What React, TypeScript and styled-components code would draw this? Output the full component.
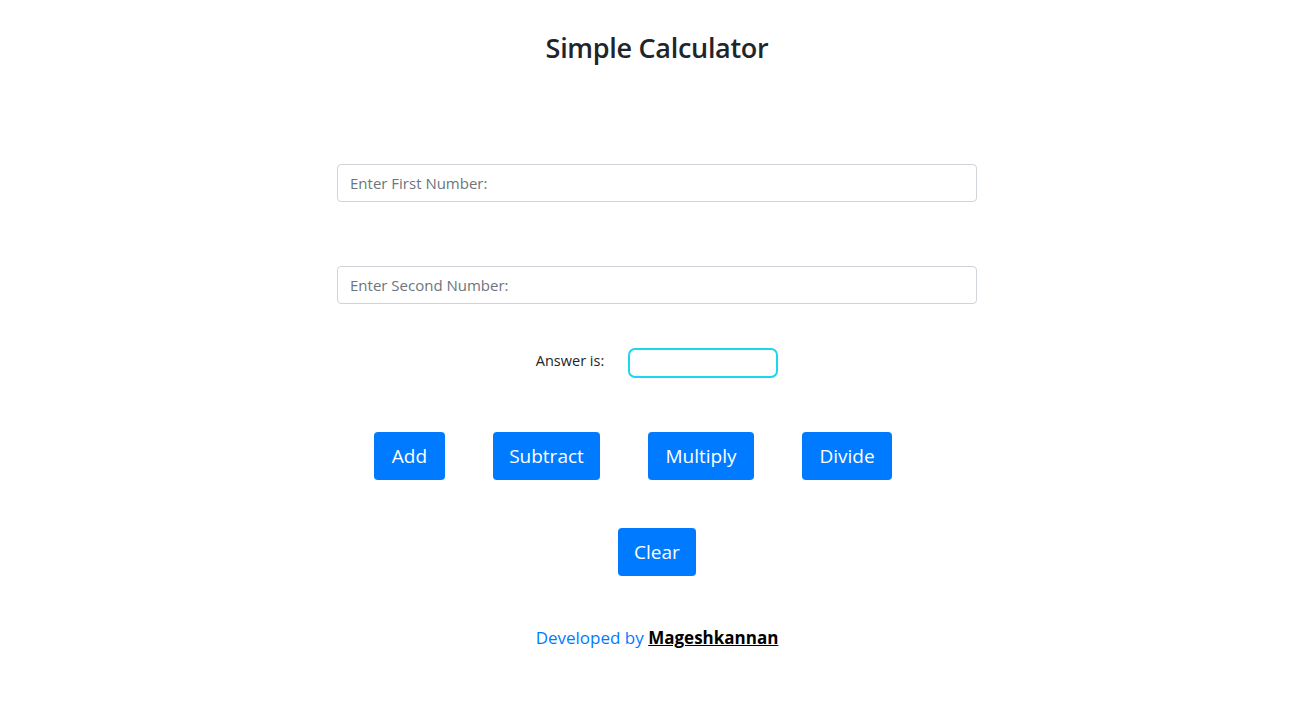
import React, { useState } from "react";
import styled, { createGlobalStyle } from "styled-components";

const GlobalStyle = createGlobalStyle`
  body {
    margin: 0;
    background: #fff;
    font-family: "Open Sans", "Noto Sans", sans-serif;
    color: #212529;
  }
`;

const Page = styled.div`
  display: flex;
  flex-direction: column;
  align-items: center;
  padding: 31px 2px 0 0;
`;

const Title = styled.h3`
  margin: 0;
  font-size: 27px;
  font-weight: 600;
  line-height: 34px;
  letter-spacing: -0.3px;
  color: #212529;
`;

const Form = styled.div`
  width: 640px;
  display: flex;
  flex-direction: column;
  align-items: center;
  margin-top: 99px;
`;

const NumberInput = styled.input`
  box-sizing: border-box;
  width: 100%;
  height: 38px;
  padding: 6px 12px;
  font-family: inherit;
  font-size: 15px;
  border: 1px solid #ced4da;
  border-radius: 4px;
  color: #495057;
  outline: none;
  & + & {
    margin-top: 64px;
  }
  &::placeholder {
    color: #6c757d;
  }
`;

const AnswerRow = styled.div`
  display: flex;
  align-items: center;
  gap: 24px;
  margin-top: 44px;
`;

const Label = styled.label`
  font-size: 14.5px;
  margin-bottom: 5px;
  color: #212529;
`;

const AnswerBox = styled.input`
  box-sizing: border-box;
  width: 150px;
  height: 30px;
  border: 2px solid #1ad6ee;
  border-radius: 7px;
  outline: none;
  font-family: inherit;
`;

const ButtonRow = styled.div<{ $top: number; $shift?: number }>`
  display: flex;
  justify-content: center;
  gap: 48px;
  margin-top: ${(p) => p.$top}px;
  margin-left: ${(p) => p.$shift ?? 0}px;
`;

const Button = styled.button<{ $w: number }>`
  box-sizing: border-box;
  width: ${(p) => p.$w}px;
  height: 48px;
  padding: 0;
  border: none;
  border-radius: 4px;
  background: #007bff;
  color: #fff;
  font-family: inherit;
  font-size: 19px;
  cursor: pointer;
`;

const Footer = styled.p`
  margin: 50px 0 0;
  font-size: 17px;
  color: #007bff;
  a {
    color: #000;
    font-weight: 700;
    text-decoration: underline;
  }
`;

function App() {
  const [a, setA] = useState("");
  const [b, setB] = useState("");
  const [ans, setAns] = useState("");
  const calc = (f: (x: number, y: number) => number) =>
    setAns(String(f(Number(a), Number(b))));

  return (
    <Page>
      <GlobalStyle />
      <Title>Simple Calculator</Title>
      <Form>
        <NumberInput
          placeholder="Enter First Number:"
          value={a}
          onChange={(e) => setA(e.currentTarget.value)}
        />
        <NumberInput
          placeholder="Enter Second Number:"
          value={b}
          onChange={(e) => setB(e.currentTarget.value)}
        />
        <AnswerRow>
          <Label>Answer is:</Label>
          <AnswerBox readOnly value={ans} />
        </AnswerRow>
      </Form>
      <ButtonRow $top={54} $shift={-48}>
        <Button $w={71} onClick={() => calc((x, y) => x + y)}>Add</Button>
        <Button $w={107} onClick={() => calc((x, y) => x - y)}>Subtract</Button>
        <Button $w={106} onClick={() => calc((x, y) => x * y)}>Multiply</Button>
        <Button $w={90} onClick={() => calc((x, y) => x / y)}>Divide</Button>
      </ButtonRow>
      <ButtonRow $top={48}>
        <Button
          $w={78}
          onClick={() => {
            setA("");
            setB("");
            setAns("");
          }}
        >
          Clear
        </Button>
      </ButtonRow>
      <Footer>
        Developed by <a href="#">Mageshkannan</a>
      </Footer>
    </Page>
  );
}

export default App;
